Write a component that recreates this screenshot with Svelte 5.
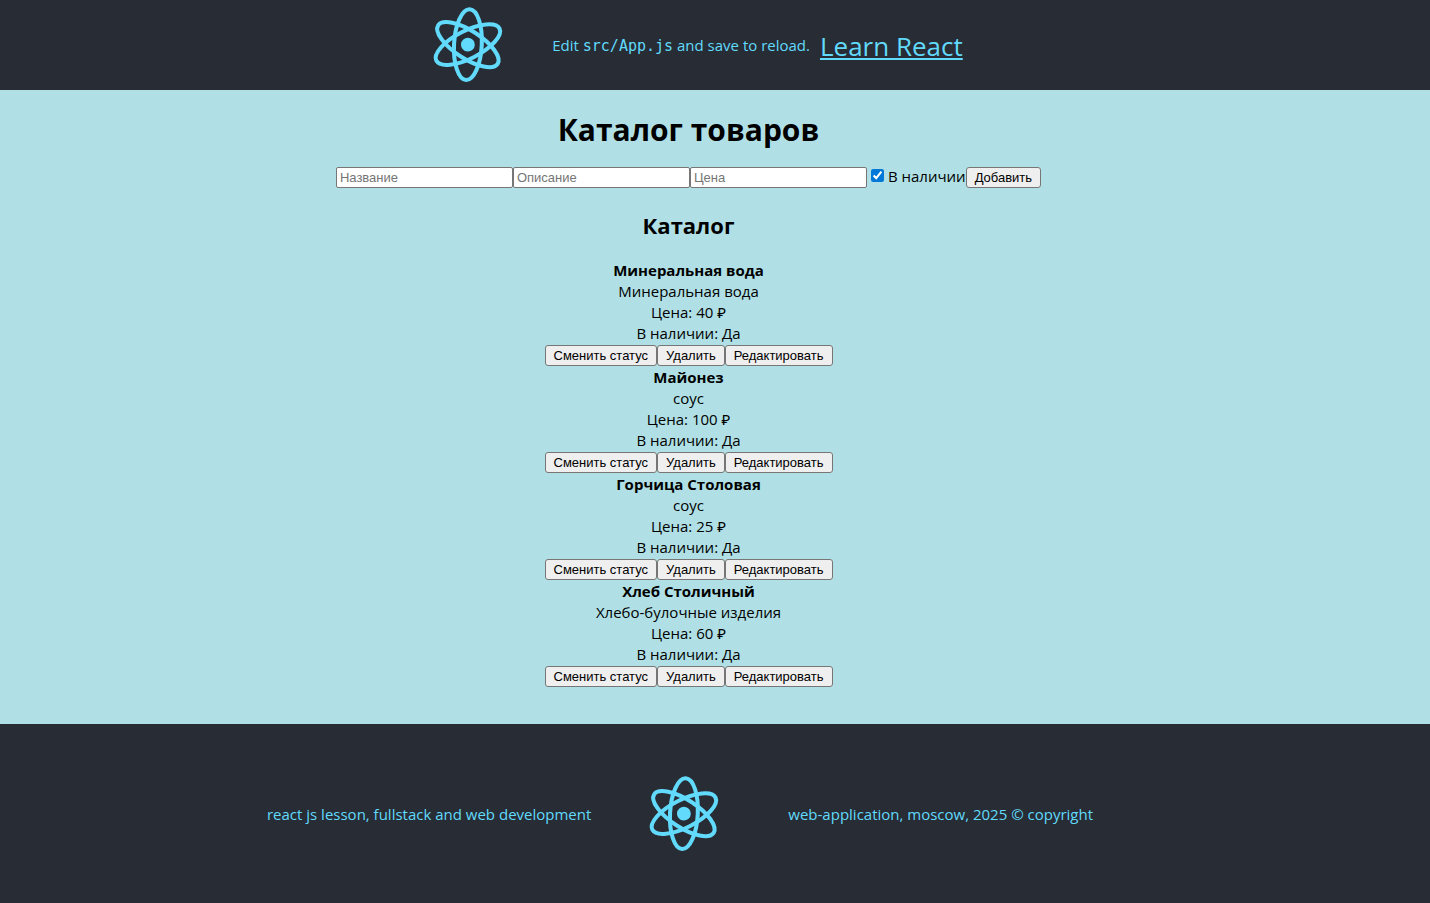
<script>
  let products = $state([
    { id: 1, name: 'Минеральная вода', description: 'Минеральная вода', price: 40, available: true },
    { id: 2, name: 'Майонез', description: 'соус', price: 100, available: true },
    { id: 3, name: 'Горчица Столовая', description: 'соус', price: 25, available: true },
    { id: 4, name: 'Хлеб Столичный', description: 'Хлебо-булочные изделия', price: 60, available: true }
  ]);
  let nextId = 5;
  let editing = null;
  let name = $state('');
  let description = $state('');
  let price = $state('');
  let available = $state(true);

  function submit(event) {
    event.preventDefault();
    if (!name) return;
    const values = { name, description, price: Number(price), available };
    if (editing) {
      products = products.map((p) => (p.id === editing ? { ...p, ...values } : p));
      editing = null;
    } else {
      products.push({ id: nextId++, ...values });
    }
    name = description = price = '';
    available = true;
  }

  function remove(id) {
    products = products.filter((p) => p.id !== id);
  }

  function edit(product) {
    editing = product.id;
    name = product.name;
    description = product.description;
    price = String(product.price);
    available = product.available;
  }
</script>

{#snippet logo()}
  <svg class="logo" viewBox="0 0 841.9 595.3" aria-hidden="true">
    <g transform="translate(417 295) rotate(3)" fill="none" stroke="#61dafb" stroke-width="27">
      <ellipse rx="92" ry="235" />
      <ellipse rx="92" ry="235" transform="rotate(60)" />
      <ellipse rx="92" ry="235" transform="rotate(120)" />
      <circle r="46" fill="#61dafb" stroke="none" />
    </g>
  </svg>
{/snippet}

<div class="app">
  <header>
    {@render logo()}
    <p>Edit <code>src/App.js</code> and save to reload.</p>
    <a href="https://reactjs.org">Learn React</a>
  </header>

  <main>
    <h1>Каталог товаров</h1>
    <form onsubmit={submit}>
      <input class="field" type="text" placeholder="Название" aria-label="Название" bind:value={name} />
      <input class="field" type="text" placeholder="Описание" aria-label="Описание" bind:value={description} />
      <input class="field" type="text" placeholder="Цена" aria-label="Цена" bind:value={price} />
      <label><input type="checkbox" bind:checked={available} />В наличии</label>
      <button type="submit">Добавить</button>
    </form>

    <h2>Каталог</h2>
    <ul>
      {#each products as product (product.id)}
        <li>
          <strong>{product.name}</strong>
          <span>{product.description}</span>
          <span>Цена: {product.price} ₽</span>
          <span>В наличии: {product.available ? 'Да' : 'Нет'}</span>
          <div class="actions">
            <button type="button" onclick={() => (product.available = !product.available)}>Сменить статус</button>
            <button type="button" onclick={() => remove(product.id)}>Удалить</button>
            <button type="button" onclick={() => edit(product)}>Редактировать</button>
          </div>
        </li>
      {/each}
    </ul>
  </main>

  <footer>
    <p>react js lesson, fullstack and web development</p>
    {@render logo()}
    <p class="copyright">web-application, moscow, 2025 © copyright</p>
  </footer>
</div>

<style>
  :global(body) {
    margin: 0;
  }
  .app {
    display: flex;
    flex-direction: column;
    min-height: 100vh;
    font-family: 'Segoe UI', 'Open Sans', 'Noto Sans', sans-serif;
    font-size: 15px;
    line-height: 21px;
    color: #000;
    background: #b0e0e6;
  }
  header,
  footer {
    display: flex;
    align-items: center;
    justify-content: center;
    box-sizing: border-box;
    color: #61dafb;
    background: #282c34;
  }
  header {
    min-height: 90px;
    padding-right: 62px;
  }
  header p,
  footer p {
    margin: 0;
    padding-top: 2px;
  }
  header p {
    margin: 0 10px 0 20px;
  }
  code {
    font-family: Consolas, 'DejaVu Sans Mono', monospace;
    font-size: 15px;
  }
  a {
    padding-top: 2px;
    color: inherit;
    font-size: 26px;
    line-height: 36px;
  }
  .logo {
    display: block;
    width: 127px;
    height: 90px;
    flex: none;
  }
  main {
    display: flex;
    flex-direction: column;
    align-items: center;
    padding: 18px 53px 36px 0;
  }
  h1 {
    margin: 0 0 16px;
    font-size: 30px;
    line-height: 43px;
  }
  h2 {
    margin: 20px 0 18px;
    font-size: 22px;
    line-height: 34px;
  }
  form,
  .actions {
    display: flex;
    align-items: center;
  }
  form {
    height: 21px;
  }
  .field {
    box-sizing: border-box;
    width: 177px;
    height: 21px;
    margin: 0;
    padding: 1px 3px;
    border: 1px solid #767676;
    border-radius: 2px;
    font: 13px 'Liberation Sans', Arial, sans-serif;
  }
  .field::placeholder {
    color: #757575;
  }
  label {
    display: flex;
    align-items: center;
    padding-bottom: 2px;
  }
  label input {
    width: 13px;
    height: 13px;
    margin: 0 4px 2px;
    accent-color: #0078d7;
  }
  button {
    box-sizing: border-box;
    height: 21px;
    margin: 0;
    padding: 0 8px;
    border: 1px solid #767676;
    border-radius: 3px;
    color: #000;
    background: #efefef;
    font: 13px 'Liberation Sans', Arial, sans-serif;
  }
  ul {
    margin: 0;
    padding: 0;
    list-style: none;
  }
  li {
    display: flex;
    flex-direction: column;
    align-items: center;
  }
  .actions {
    padding: 1px 0;
  }
  footer {
    flex: 1;
    gap: 30px;
    padding: 44px 70px 44px 0;
  }
  footer .copyright {
    margin-left: 10px;
  }
</style>
